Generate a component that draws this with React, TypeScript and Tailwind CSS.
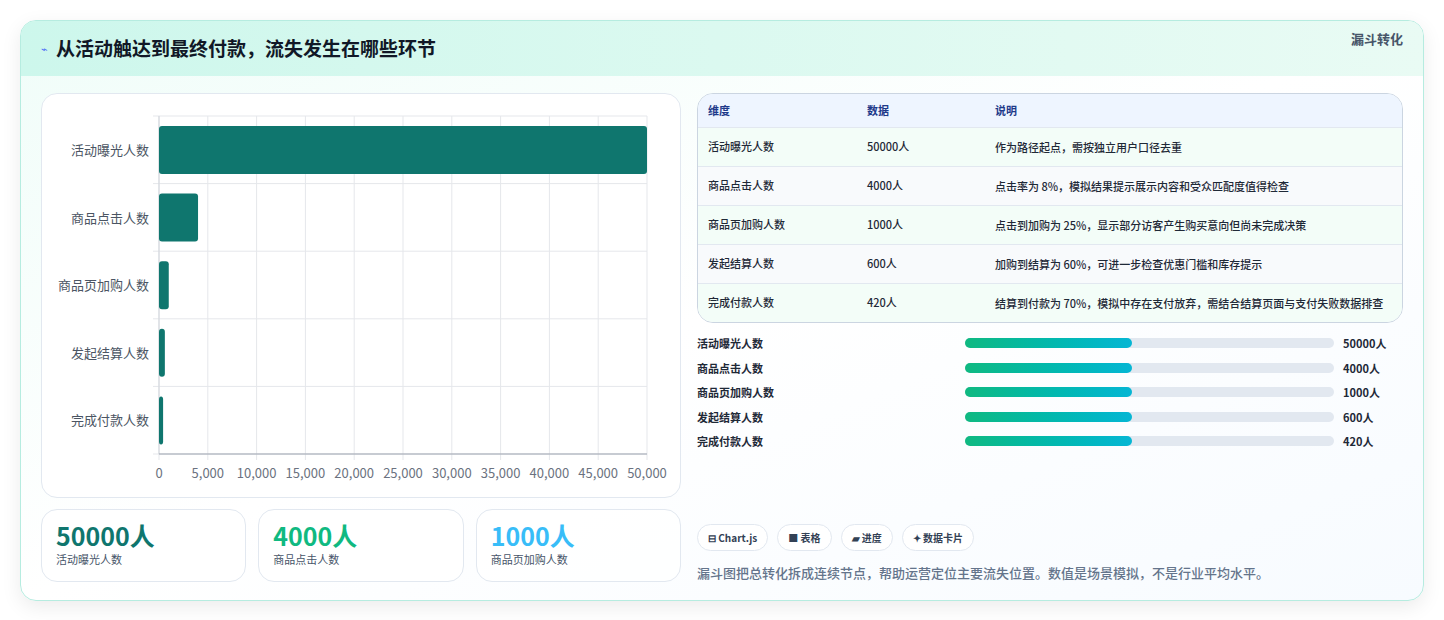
const rows = [
  { name: "活动曝光人数", v: 50000, note: "作为路径起点，需按独立用户口径去重" },
  { name: "商品点击人数", v: 4000, note: "点击率为 8%，模拟结果提示展示内容和受众匹配度值得检查" },
  { name: "商品页加购人数", v: 1000, note: "点击到加购为 25%，显示部分访客产生购买意向但尚未完成决策" },
  { name: "发起结算人数", v: 600, note: "加购到结算为 60%，可进一步检查优惠门槛和库存提示" },
  { name: "完成付款人数", v: 420, note: "结算到付款为 70%，模拟中存在支付放弃，需结合结算页面与支付失败数据排查" },
];

const ticks = [0, 5000, 10000, 15000, 20000, 25000, 30000, 35000, 40000, 45000, 50000];

function Chart() {
  const L = 117, T = 22, W = 488, H = 338;
  const band = H / 5;
  return (
    <svg width="640" height="403" className="block">
      {ticks.map((t, i) => {
        const x = L + (W * i) / 10;
        return (
          <g key={t}>
            <line x1={x} y1={T} x2={x} y2={T + H + 6} stroke="#e5e7eb" />
            <text x={x} y={T + H + 24} textAnchor="middle" fontSize="13" fill="#6b7280">
              {t.toLocaleString("en-US")}
            </text>
          </g>
        );
      })}
      {[0, 1, 2, 3, 4, 5].map((i) => (
        <line key={i} x1={L - 6} x2={L + W} y1={T + band * i} y2={T + band * i} stroke="#e5e7eb" />
      ))}
      <line x1={L} x2={L} y1={T} y2={T + H} stroke="#d1d5db" />
      <line x1={L} x2={L + W} y1={T + H} y2={T + H} stroke="#9ca3af" />
      {rows.map((r, i) => {
        const y = T + band * i + 10;
        const w = Math.max(3, (W * r.v) / 50000);
        return (
          <g key={r.name}>
            <rect x={L} y={y} width={w} height={48} rx={3} fill="#0f766e" />
            <text x={L - 10} y={y + 29} textAnchor="end" fontSize="13" fill="#4b5563">
              {r.name}
            </text>
          </g>
        );
      })}
    </svg>
  );
}

export default function App() {
  return (
    <div className="min-h-[620px] bg-white p-5" style={{ fontFamily: '"Noto Sans CJK SC", "Noto Sans", sans-serif' }}>
      <div className="overflow-hidden rounded-2xl border border-[#b6ece0] bg-gradient-to-br from-[#f0fdf9] via-white to-[#f7fbff] shadow-[0_6px_20px_rgba(0,0,0,0.08)]">
        <div className="flex h-[55px] items-center justify-between bg-gradient-to-r from-[#cdf7ec] to-[#e9fbf4] px-5">
          <div className="flex items-center gap-2">
            <span className="text-[11px] text-[#4f6ef7]">⌁</span>
            <h1 className="text-[19px] font-bold text-[#111827]">从活动触达到最终付款，流失发生在哪些环节</h1>
          </div>
          <span className="-mt-5 text-[13px] font-semibold text-[#475569]">漏斗转化</span>
        </div>
        <div className="flex gap-4 px-5 pb-[18px] pt-[17px]">
          <div className="w-[640px] shrink-0">
            <div className="rounded-2xl border border-[#e2e8f0] bg-white">
              <Chart />
            </div>
            <div className="mt-[11px] flex gap-[12px]">
              {[
                { v: "50000人", c: "text-[#0f766e]", l: "活动曝光人数" },
                { v: "4000人", c: "text-[#10b981]", l: "商品点击人数" },
                { v: "1000人", c: "text-[#38bdf8]", l: "商品页加购人数" },
              ].map((s) => (
                <div key={s.l} className="h-[73px] w-[206px] rounded-2xl border border-[#e2e8f0] bg-white/70 px-[14px] pt-[9px]">
                  <div className={`text-[25px] font-bold leading-[32px] ${s.c}`}>{s.v}</div>
                  <div className="text-[11px] text-[#475569]">{s.l}</div>
                </div>
              ))}
            </div>
          </div>
          <div className="flex min-w-0 flex-1 flex-col">
            <div className="overflow-hidden rounded-2xl border border-[#cbd5e1] text-[11px] text-[#1f2937]">
              <div className="flex h-[33px] items-center bg-[#eef5ff] font-semibold text-[#1e3a8a]">
                <div className="w-[169px] pl-[10px]">维度</div>
                <div className="w-[128px]">数据</div>
                <div>说明</div>
              </div>
              {rows.map((r, i) => (
                <div key={r.name} className={`flex border-t border-[#e2e8f0] py-[10px] font-medium ${i % 2 ? "bg-[#f8fafc]" : "bg-[#f3fdf8]"}`}>
                  <div className="w-[169px] shrink-0 pl-[10px]">{r.name}</div>
                  <div className="w-[128px] shrink-0">{r.v}人</div>
                  <div className="pr-3 leading-[18px]">{r.note}</div>
                </div>
              ))}
            </div>
            <div className="mt-[12px] flex flex-col gap-[8px]">
              {rows.map((r) => (
                <div key={r.name} className="flex h-[16.5px] items-center text-[11px] font-semibold text-[#1f2937]">
                  <div className="w-[268px]">{r.name}</div>
                  <div className="h-[10px] w-[369px] rounded-full bg-[#e2e8f0]">
                    <div className="h-full w-[167px] rounded-full bg-gradient-to-r from-[#10b981] to-[#06b6d4]" />
                  </div>
                  <div className="pl-[9px]">{r.v}人</div>
                </div>
              ))}
            </div>
            <div className="mt-auto">
              <div className="flex gap-[9px] text-[10px] font-semibold text-[#334155]">
                {["⊟ Chart.js", "■ 表格", "▰ 进度", "✦ 数据卡片"].map((c) => (
                  <span key={c} className="flex h-[27px] items-center rounded-full border border-[#e2e8f0] bg-white px-[10px]">{c}</span>
                ))}
              </div>
              <p className="mt-[12px] text-[13px] font-medium text-[#64748b]">漏斗图把总转化拆成连续节点，帮助运营定位主要流失位置。数值是场景模拟，不是行业平均水平。</p>
            </div>
          </div>
        </div>
      </div>
    </div>
  );
}
